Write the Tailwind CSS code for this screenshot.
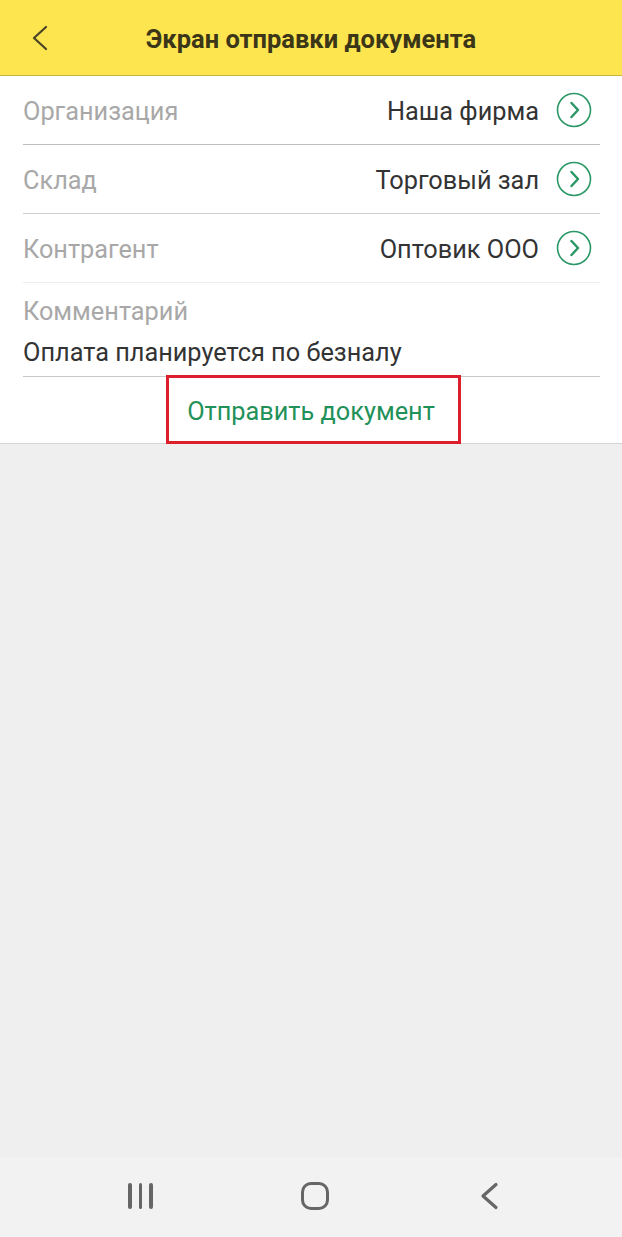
<!DOCTYPE html>
<html lang="ru">
<head>
    <meta charset="UTF-8">
    <meta name="viewport" content="width=device-width, initial-scale=1.0">
    <title>Экран отправки документа</title>
    <script src="https://cdn.jsdelivr.net/npm/@tailwindcss/browser@4"></script>
</head>
<body class="bg-[#efefef] h-[1237px] overflow-hidden flex flex-col font-['Roboto',sans-serif]">
    <!-- Header -->
    <header class="h-[76px] shrink-0 bg-[#fde550] border-b border-[#c9b63f] flex items-center relative">
        <svg class="absolute left-[31px] top-[25px]" width="18" height="26" viewBox="0 0 18 26" fill="none" stroke="#4a4426" stroke-width="2.2" stroke-linecap="round" stroke-linejoin="round"><path d="M15 2 L3 13 L15 24"/></svg>
        <h1 class="w-full text-center text-[25.5px] font-bold text-[#3b3618] pt-[3px]">Экран отправки документа</h1>
    </header>

    <!-- Form -->
    <main class="bg-white border-b border-[#d4d4d4] relative">
        <div class="pl-[23px] pr-[22px]">
            <div class="h-[69px] border-b border-[#bdbdbd] flex items-center justify-between text-[25.3px]">
                <span class="text-[#a8a8a8] pt-[4px]">Организация</span>
                <div class="flex items-center gap-[17px] pr-[8px]">
                    <span class="text-[#333333] pt-[4px]">Наша фирма</span>
                    <svg width="36" height="36" viewBox="0 0 36 36" fill="none" stroke="#2a9866" stroke-linecap="round" stroke-linejoin="round"><circle cx="18" cy="18" r="16.5" stroke-width="1.6"/><path d="M15.5 11 L22 18 L15.5 25" stroke-width="2.5"/></svg>
                </div>
            </div>
            <div class="h-[69px] border-b border-[#d0d0d0] flex items-center justify-between text-[25.3px]">
                <span class="text-[#a8a8a8] pt-[4px]">Склад</span>
                <div class="flex items-center gap-[17px] pr-[8px]">
                    <span class="text-[#333333] pt-[4px]">Торговый зал</span>
                    <svg width="36" height="36" viewBox="0 0 36 36" fill="none" stroke="#2a9866" stroke-linecap="round" stroke-linejoin="round"><circle cx="18" cy="18" r="16.5" stroke-width="1.6"/><path d="M15.5 11 L22 18 L15.5 25" stroke-width="2.5"/></svg>
                </div>
            </div>
            <div class="h-[69px] border-b border-[#ececec] flex items-center justify-between text-[25.3px]">
                <span class="text-[#a8a8a8] pt-[4px]">Контрагент</span>
                <div class="flex items-center gap-[17px] pr-[8px]">
                    <span class="text-[#333333] pt-[4px]">Оптовик ООО</span>
                    <svg width="36" height="36" viewBox="0 0 36 36" fill="none" stroke="#2a9866" stroke-linecap="round" stroke-linejoin="round"><circle cx="18" cy="18" r="16.5" stroke-width="1.6"/><path d="M15.5 11 L22 18 L15.5 25" stroke-width="2.5"/></svg>
                </div>
            </div>
            <div class="h-[94px] border-b border-[#c8c8c8] pt-[15px] text-[25.3px] leading-[28px]">
                <div class="text-[#a8a8a8]">Комментарий</div>
                <div class="text-[#333333] mt-[13px]">Оплата планируется по безналу</div>
            </div>
        </div>
        <div class="h-[66px] flex items-center justify-center text-[25.3px] text-[#1f9159] pt-[3px]">Отправить документ</div>
        <!-- Red annotation frame -->
        <div class="absolute left-[166px] top-[299px] w-[295px] h-[69px] border-[3px] border-[#dd1f2b]"></div>
    </main>

    <div class="flex-1"></div>

    <!-- Android nav bar -->
    <nav class="h-[80px] shrink-0 bg-[#f2f2f2] relative flex items-center">
        <div class="absolute left-[128px] top-[26px] flex gap-[7px]">
            <div class="w-[3.5px] h-[26px] rounded-full bg-[#666666]"></div>
            <div class="w-[3.5px] h-[26px] rounded-full bg-[#666666]"></div>
            <div class="w-[3.5px] h-[26px] rounded-full bg-[#666666]"></div>
        </div>
        <div class="absolute left-[301px] top-[25px] w-[28px] h-[28px] rounded-[10px] border-[3.5px] border-[#666666]"></div>
        <svg class="absolute left-[480px] top-[25px]" width="20" height="28" viewBox="0 0 20 28" fill="none" stroke="#666666" stroke-width="3.2" stroke-linecap="round" stroke-linejoin="round"><path d="M16 2.5 L3 14 L16 25.5"/></svg>
    </nav>
</body>
</html>
